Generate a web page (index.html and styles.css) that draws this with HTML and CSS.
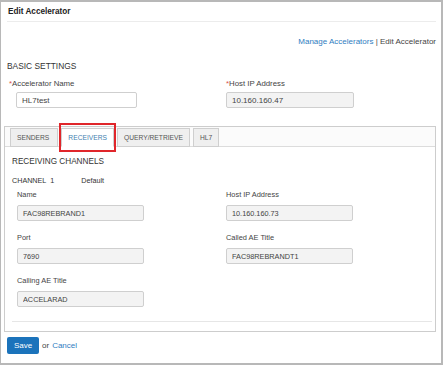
FILE: index.html
```html
<!DOCTYPE html>
<html lang='en'>
    <head>
        <meta charset='utf-8' />
        <title>Edit Accelerator</title>
        <link rel="stylesheet" href="styles.css">
    </head>
    <body>
        <div class="frame">
            <div class="head">Edit Accelerator</div>
            <div class="crumbs"><a href="#">Manage Accelerators</a> | Edit Accelerator</div>
            <div class="section">BASIC SETTINGS</div>
            <div class="basic">
                <div class="field">
                    <label><span class="req">*</span>Accelerator Name</label>
                    <input class="name-input" type="text" value="HL7test">
                </div>
                <div class="field">
                    <label><span class="req">*</span>Host IP Address</label>
                    <input class="ip-input" type="text" value="10.160.160.47" readonly>
                </div>
            </div>
            <div class="panel">
                <div class="tabs">
                    <span class="tab">SENDERS</span>
                    <span class="tab active">RECEIVERS</span>
                    <span class="tab">QUERY/RETRIEVE</span>
                    <span class="tab">HL7</span>
                </div>
                <div class="panel-body">
                    <div class="sub">RECEIVING CHANNELS</div>
                    <div class="channel"><span>CHANNEL&nbsp;&nbsp;1</span><span class="default">Default</span></div>
                    <div class="grid">
                        <div class="cell">
                            <label>Name</label>
                            <input type="text" value="FAC98REBRAND1" readonly>
                        </div>
                        <div class="cell">
                            <label>Host IP Address</label>
                            <input type="text" value="10.160.160.73" readonly>
                        </div>
                        <div class="cell">
                            <label>Port</label>
                            <input type="text" value="7690" readonly>
                        </div>
                        <div class="cell">
                            <label>Called AE Title</label>
                            <input type="text" value="FAC98REBRANDT1" readonly>
                        </div>
                        <div class="cell">
                            <label>Calling AE Title</label>
                            <input type="text" value="ACCELARAD" readonly>
                        </div>
                    </div>
                    <div class="divider"></div>
                </div>
            </div>
            <div class="actions">
                <button class="save">Save</button>
                <span class="or">or</span>
                <a href="#">Cancel</a>
            </div>
        </div>
    </body>
</html>
```

FILE: styles.css
```css
* {
    margin: 0;
    padding: 0;
    box-sizing: border-box;
}
body {
    font-family: "Liberation Sans", Arial, sans-serif;
    color: #444;
    background-color: #fff;
}
a {
    color: #2f7dc1;
    text-decoration: none;
}
.frame {
    width: 443px;
    height: 365px;
    border-style: solid;
    border-color: #b8b8b8;
    border-width: 2px 2px 2px 1px;
    overflow: hidden;
}
.head {
    margin: 0 5px 0 6px;
    padding-left: 1px;
    height: 20px;
    line-height: 19px;
    font-size: 8.2px;
    font-weight: bold;
    color: #222;
    border-bottom: 1px solid #ececec;
}
.crumbs {
    margin: 14px 5px 0 0;
    text-align: right;
    font-size: 8px;
    line-height: 12px;
    color: #444;
}
.section {
    margin-top: 12px;
    padding-left: 6px;
    font-size: 8.4px;
    line-height: 12px;
    color: #333;
}
.basic {
    display: grid;
    grid-template-columns: 217px 1fr;
    margin-top: 6px;
    padding-left: 8px;
}
label {
    display: block;
    font-size: 7.8px;
    line-height: 12px;
    color: #444;
}
.req {
    color: #d9534f;
}
input {
    display: block;
    height: 16px;
    border: 1px solid #cfcfcf;
    border-radius: 2px;
    background-color: #f3f3f3;
    font-family: "Liberation Sans", Arial, sans-serif;
    color: #444;
    padding-left: 5px;
    outline: none;
}
.basic label {
    margin-bottom: 2px;
}
.basic input {
    font-size: 8px;
}
.basic .name-input {
    margin-left: 7px;
    width: 121px;
    background-color: #fff;
}
.basic .ip-input {
    width: 128px;
}
/* tab panel */
.panel {
    margin: 18px 5px 0 3px;
    border: 1px solid #cdcdcd;
}
.tabs {
    display: flex;
    gap: 3px;
    padding: 1px 0 0 5px;
    background-color: #fbfbfb;
    border-bottom: 1px solid #dcdcdc;
}
.tab {
    position: relative;
    height: 19px;
    margin-bottom: -1px;
    padding: 0 6px;
    line-height: 18px;
    font-size: 6.7px;
    color: #555;
    background-color: #efefef;
    border: 1px solid #cfcfcf;
}
.tab:first-child {
    padding-right: 8px;
}
.tab.active {
    background-color: #fff;
    border-bottom-color: #fff;
    color: #3f7fb0;
}
.tab.active::after {
    content: "";
    position: absolute;
    top: -6px;
    bottom: -6px;
    left: -3px;
    right: -3px;
    border: 2px solid #e0262b;
}
.panel-body {
    padding: 9px 3px 9px 7px;
}
.sub {
    font-size: 8.2px;
    line-height: 12px;
    color: #333;
}
.channel {
    margin-top: 7px;
    display: flex;
    font-size: 7.2px;
    line-height: 12px;
    color: #333;
}
.channel .default {
    margin-left: 27px;
}
.grid {
    display: grid;
    grid-template-columns: 214px 1fr;
    row-gap: 11px;
    margin-top: 2px;
}
.grid .cell:nth-child(odd) {
    padding-left: 5px;
}
.grid label {
    font-size: 7.4px;
    margin-bottom: 4px;
}
.grid input {
    width: 127px;
    font-size: 7.3px;
}
.divider {
    margin-top: 14px;
    border-top: 1px solid #e6e6e6;
}
.actions {
    display: flex;
    align-items: center;
    gap: 3px;
    margin: 5px 0 0 6px;
    font-size: 8px;
}
.save {
    width: 32px;
    height: 17px;
    border: 0;
    border-radius: 2px;
    background-color: #1b73bb;
    color: #fff;
    font-family: "Liberation Sans", Arial, sans-serif;
    font-size: 8px;
}
.or {
    color: #444;
}
```
